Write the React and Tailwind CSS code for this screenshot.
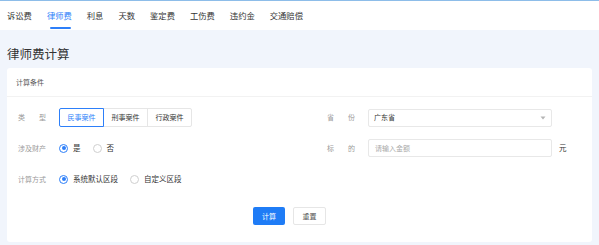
import React, { useState } from "react";

const tabs = ["诉讼费", "律师费", "利息", "天数", "鉴定费", "工伤费", "违约金", "交通赔偿"];

const Label = ({ chars }) => (
  <div className="w-[28px] mr-[13px] flex justify-between text-[7px] text-[#9a9a9a] shrink-0">
    {chars.map((c, i) => (
      <span key={i}>{c}</span>
    ))}
  </div>
);

const Radio = ({ checked, label }) => (
  <label className="flex items-center mr-[12px]">
    <span
      className={`w-[9px] h-[9px] rounded-full border flex items-center justify-center mr-[5px] ${
        checked ? "border-[#2d7ff9]" : "border-[#cfcfcf]"
      }`}
    >
      {checked && <span className="w-[4px] h-[4px] rounded-full bg-[#2d7ff9]" />}
    </span>
    <span className="text-[7.5px] text-[#333]">{label}</span>
  </label>
);

const App = () => {
  const [active] = useState(1);
  const [kind, setKind] = useState(0);

  return (
    <div
      className="w-[599px] h-[245px] bg-[#f1f5fc] overflow-hidden"
      style={{ fontFamily: '"Noto Sans CJK SC", "Noto Sans", sans-serif' }}
    >
      <div className="h-[30px] bg-white border-t border-[#8dbde9] flex items-end pl-[7px] gap-[15px]">
        {tabs.map((t, i) => (
          <div key={t} className="relative h-full flex items-center">
            <span className={`text-[8.3px] ${i === active ? "text-[#2d7ff9]" : "text-[#333]"}`}>{t}</span>
            {i === active && (
              <span className="absolute bottom-[1px] left-[3px] right-[1px] h-[2px] bg-[#2d7ff9] rounded" />
            )}
          </div>
        ))}
      </div>

      <div className="h-[38px] flex items-center pl-[7px] pt-[10px]">
        <h1 className="text-[12.5px] text-[#333] leading-none">律师费计算</h1>
      </div>

      <div className="mx-[7px] bg-white rounded-[3px] h-[174px]">
        <div className="h-[29px] flex items-center pl-[9px] border-b border-[#f2f2f2]">
          <span className="text-[7px] text-[#555]">计算条件</span>
        </div>

        <div className="pl-[11px] pt-[11px]">
          <div className="flex h-[19px] items-center">
            <div className="w-[309px] flex items-center">
              <Label chars={["类", "型"]} />
              <div className="flex">
                {["民事案件", "刑事案件", "行政案件"].map((k, i) => (
                  <button
                    key={k}
                    onClick={() => setKind(i)}
                    className={`w-[45px] h-[19px] text-[7px] border ${
                      i === kind
                        ? "border-[#2d7ff9] text-[#2d7ff9] relative z-10"
                        : "border-[#e6e6e6] text-[#333]"
                    } ${i === 0 ? "rounded-l-[2px]" : "-ml-px"} ${i === 2 ? "rounded-r-[2px]" : ""}`}
                  >
                    {k}
                  </button>
                ))}
              </div>
            </div>
            <div className="flex items-center">
              <Label chars={["省", "份"]} />
              <div className="w-[184px] h-[18px] border border-[#e8e8e8] rounded-[2px] flex items-center justify-between px-[5px]">
                <span className="text-[7px] text-[#333]">广东省</span>
                <svg width="6" height="4" viewBox="0 0 6 4">
                  <path d="M0.5 0.5 L3 3.5 L5.5 0.5 Z" fill="#b5b5b5" />
                </svg>
              </div>
            </div>
          </div>

          <div className="flex h-[18px] items-center mt-[12px]">
            <div className="w-[309px] flex items-center">
              <Label chars={["涉及财产"]} />
              <Radio checked label="是" />
              <Radio label="否" />
            </div>
            <div className="flex items-center">
              <Label chars={["标", "的"]} />
              <div className="w-[184px] h-[18px] border border-[#e8e8e8] rounded-[2px] flex items-center px-[6px]">
                <span className="text-[7px] text-[#aaa]">请输入金额</span>
              </div>
              <span className="ml-[7px] text-[7.5px] text-[#333]">元</span>
            </div>
          </div>

          <div className="flex h-[18px] items-center mt-[13px]">
            <Label chars={["计算方式"]} />
            <Radio checked label="系统默认区段" />
            <Radio label="自定义区段" />
          </div>

          <div className="flex justify-center gap-[8px] mt-[19px] pr-[21px] -ml-[11px] pl-[1px]">
            <button className="w-[32px] h-[18px] rounded-[2px] bg-[#1f7cf6] text-white text-[7px]">计算</button>
            <button className="w-[33px] h-[18px] rounded-[2px] border border-[#e6e6e6] bg-white text-[#555] text-[7px]">
              重置
            </button>
          </div>
        </div>
      </div>
    </div>
  );
};

export default App;
